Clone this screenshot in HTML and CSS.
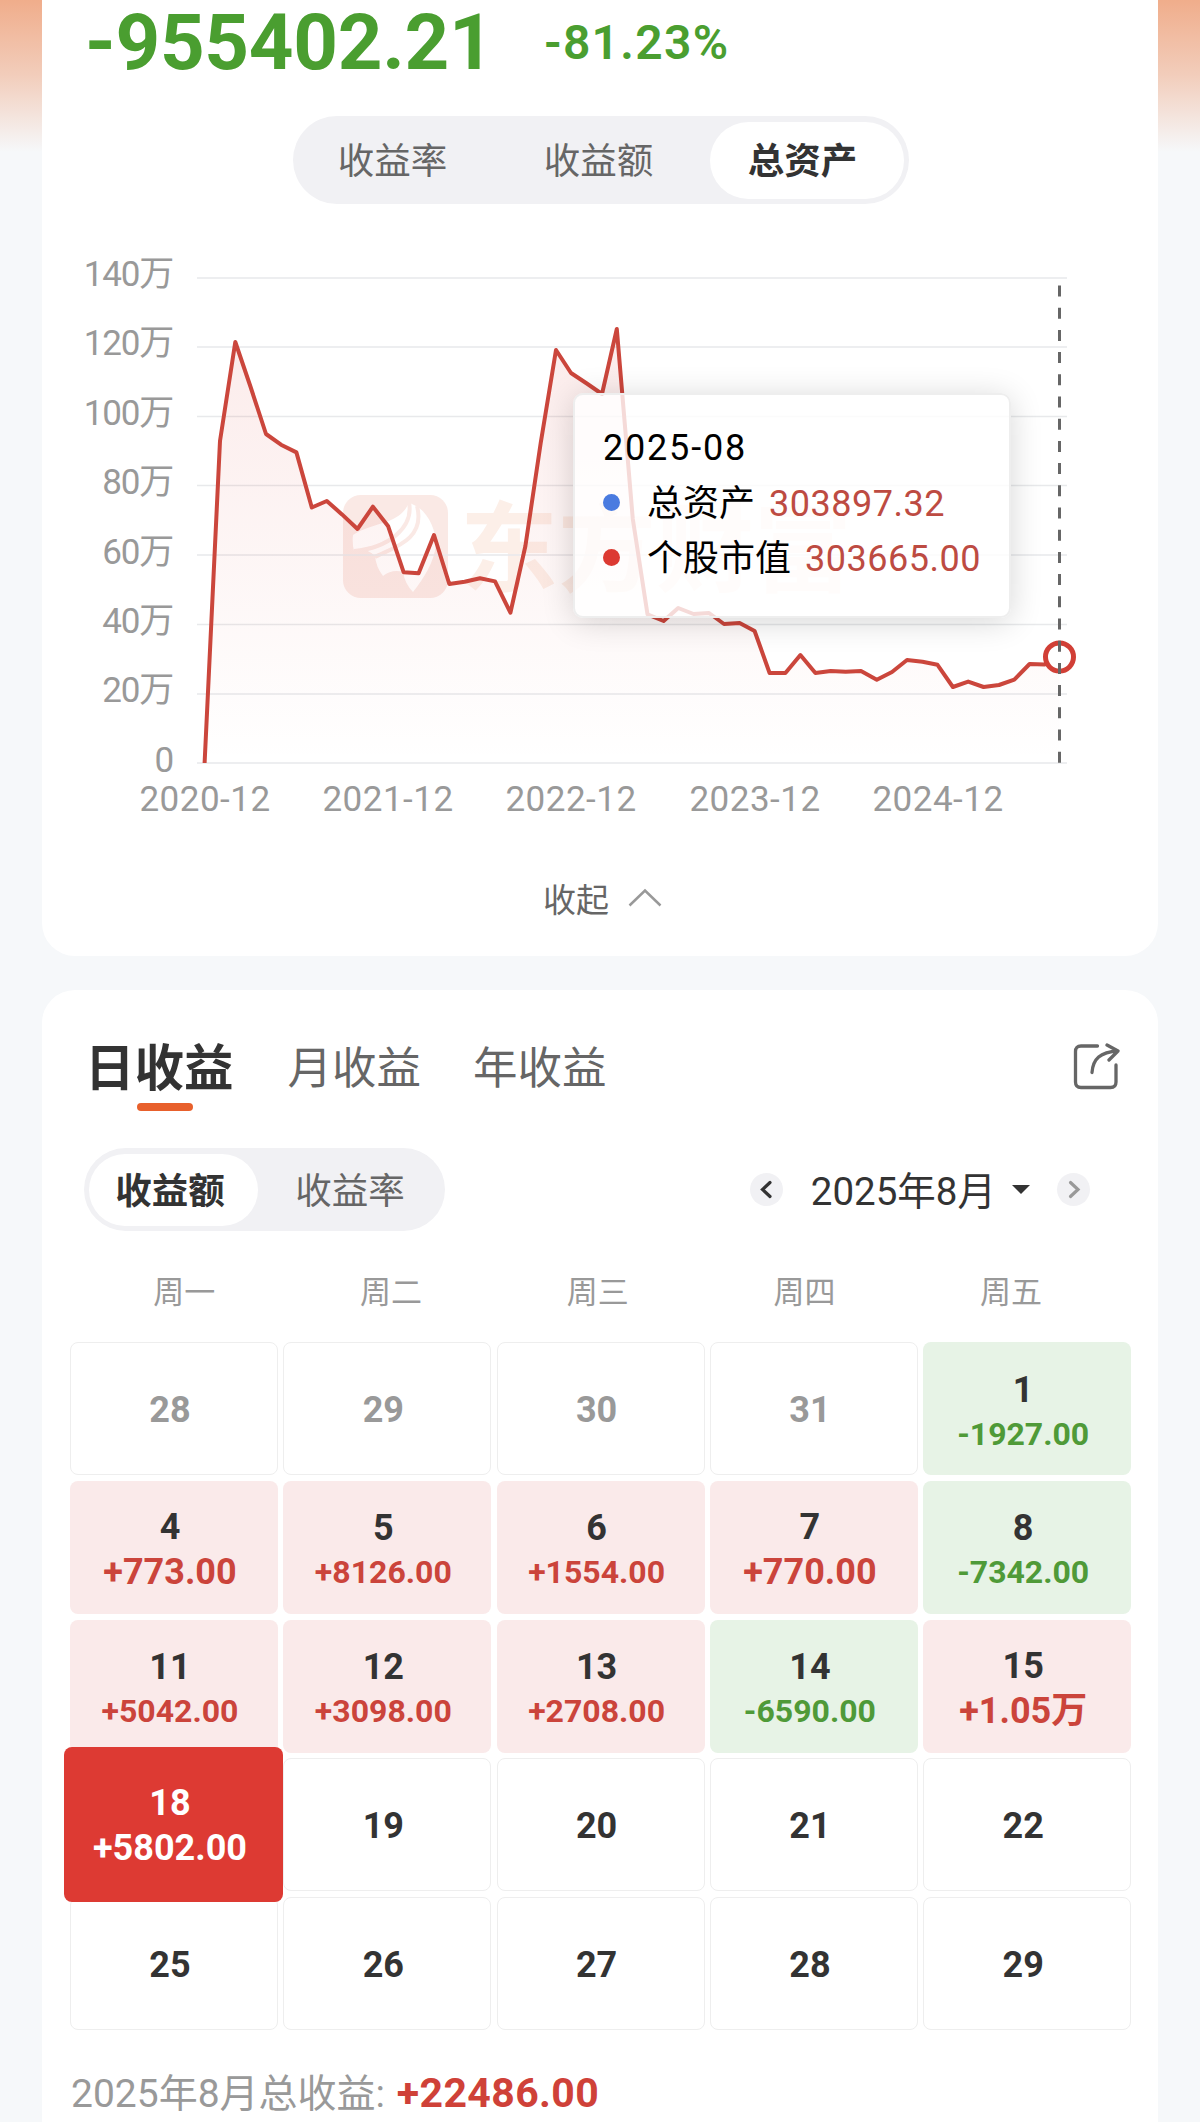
FILE: index.html
```html
<!DOCTYPE html>
<html lang="zh-CN">

<head>
    <meta charset="UTF-8">
    <meta name="viewport" content="width=device-width, initial-scale=1.0">
    <title>收益</title>
    <link rel="stylesheet" href="styles.css">
</head>

<body>
    <section class="card asset">
        <div class="total">
            <span class="total-num">-955402.21</span>
            <span class="total-rate">-81.23%</span>
        </div>
        <div class="seg seg-chart">
            <span>收益率</span>
            <span>收益额</span>
            <span class="on">总资产</span>
        </div>
        <div class="chart">
            <svg width="1116" height="600" viewBox="42 240 1116 600">
                <defs>
                    <linearGradient id="area" x1="0" y1="0" x2="0" y2="1">
                        <stop offset="0" stop-color="#dc3a32" stop-opacity=".1" />
                        <stop offset="1" stop-color="#dc3a32" stop-opacity="0" />
                    </linearGradient>
                </defs>
                <!-- 水印 -->
                <g class="mark">
                    <rect x="343" y="495" width="105" height="103" rx="18" />
                    <path class="mark-in" d="M353 535C375 521 400 525 409 502.500L418 507C429 515 436 530 436 545C434 562 424 578 413 592Q405 584 403 572Q392 569 383 576Q376 567 375 556Q364 546 354 551Q352 543 353 535Z" />
                    <path class="mark-line" d="M409 502C414 528 388 548 354 551M417 506C426 540 392 548 375 557" />
                    <text x="460" y="584">东方财富</text>
                </g>
                <g class="grid">
                    <path d="M197 278H1067M197 347H1067M197 416.5H1067M197 485.5H1067M197 555H1067M197 624.5H1067M197 694H1067M197 763H1067" />
                </g>
                <g class="axis-y">
                    <text x="173" y="286">140万</text>
                    <text x="173" y="355">120万</text>
                    <text x="173" y="425">100万</text>
                    <text x="173" y="494">80万</text>
                    <text x="173" y="564">60万</text>
                    <text x="173" y="633">40万</text>
                    <text x="173" y="702">20万</text>
                    <text x="173" y="771.5">0</text>
                </g>
                <g class="axis-x">
                    <text x="205" y="811">2020-12</text>
                    <text x="388" y="811">2021-12</text>
                    <text x="571" y="811">2022-12</text>
                    <text x="755" y="811">2023-12</text>
                    <text x="938" y="811">2024-12</text>
                </g>
                <path fill="url(#area)" d="M204.6 763L220 441L235.3 342L250.6 387L266 434L281 444.7L296.4 452.4L311.8 507.5L326.8 501L342 514.4L357.5 529L372.9 506.7L388.2 526.3L403.6 572.2L418.6 573.3L434 535L449.3 584L464.6 581.7L480 578.3L495 581.4L510.4 612.7L525.4 546L540.7 443L556 350L571 373L586.8 383.5L602 394L616.8 329L632.8 519L647.5 614.3L663.6 621L678.2 608L693.6 614L709 613L724 624L739.6 623L754.6 631L769.6 673L785.4 673L800.4 655L815.4 673L830.7 671L845.7 671.7L861 671L876.8 679.7L892 672L907 660L922.5 661.7L937.5 664.8L952.9 687L968.2 681.6L983.6 687L999 685L1014.3 679.7L1029.6 664L1044.6 664.4L1059.5 657V763Z" />
                <polyline class="line" points="204.6,763 220,441 235.3,342 250.6,387 266,434 281,444.7 296.4,452.4 311.8,507.5 326.8,501 342,514.4 357.5,529 372.9,506.7 388.2,526.3 403.6,572.2 418.6,573.3 434,535 449.3,584 464.6,581.7 480,578.3 495,581.4 510.4,612.7 525.4,546 540.7,443 556,350 571,373 586.8,383.5 602,394 616.8,329 632.8,519 647.5,614.3 663.6,621 678.2,608 693.6,614 709,613 724,624 739.6,623 754.6,631 769.6,673 785.4,673 800.4,655 815.4,673 830.7,671 845.7,671.7 861,671 876.8,679.7 892,672 907,660 922.5,661.7 937.5,664.8 952.9,687 968.2,681.6 983.6,687 999,685 1014.3,679.7 1029.6,664 1044.6,664.4 1059.5,657" />
                <circle class="point" cx="1059.5" cy="657" r="14" />
                <path class="pointer" d="M1059.5 285.5V763" />
            </svg>
            <div class="tip">
                <p class="tip-date">2025-08</p>
                <p><i class="blue"></i>总资产<b>303897.32</b></p>
                <p><i class="red"></i>个股市值<b>303665.00</b></p>
            </div>
        </div>
        <div class="fold">
            收起
            <svg width="34" height="20" viewBox="0 0 34 20">
                <path d="M1.5 17.5L17 2.5L32.5 17.5" />
            </svg>
        </div>
    </section>

    <section class="card profit">
        <div class="tabs">
            <span class="on">日收益</span>
            <span>月收益</span>
            <span>年收益</span>
            <svg class="share" width="48" height="48" viewBox="0 0 48 48">
                <path d="M24.5 3H8Q2.5 3 2.5 8.5V39Q2.5 44.5 8 44.5H37.5Q43 44.5 43 39V22" />
                <path d="M19 29.500C20 16 27 9 45 8M34 2L45 8L36 17" />
            </svg>
        </div>
        <div class="bar">
            <div class="seg seg-day">
                <span class="on">收益额</span>
                <span>收益率</span>
            </div>
            <div class="month">
                <span class="arrow"><svg width="33" height="33" viewBox="0 0 33 33"><path d="M20 9.5L12.5 16.5L20 23.5" /></svg></span>
                <span class="month-text">2025年8月</span>
                <span class="caret"></span>
                <span class="arrow next"><svg width="33" height="33" viewBox="0 0 33 33"><path d="M13.5 9.5L21 16.5L13.5 23.5" /></svg></span>
            </div>
        </div>
        <div class="week">
            <span>周一</span>
            <span>周二</span>
            <span>周三</span>
            <span>周四</span>
            <span>周五</span>
        </div>
        <div class="days">
            <div class="day out">28</div>
            <div class="day out">29</div>
            <div class="day out">30</div>
            <div class="day out">31</div>
            <div class="day down">1<em>-1927.00</em></div>

            <div class="day up big">4<em>+773.00</em></div>
            <div class="day up">5<em>+8126.00</em></div>
            <div class="day up">6<em>+1554.00</em></div>
            <div class="day up big">7<em>+770.00</em></div>
            <div class="day down">8<em>-7342.00</em></div>

            <div class="day up">11<em>+5042.00</em></div>
            <div class="day up">12<em>+3098.00</em></div>
            <div class="day up">13<em>+2708.00</em></div>
            <div class="day down">14<em>-6590.00</em></div>
            <div class="day up big">15<em>+1.05万</em></div>

            <div class="day big cur">18<em>+5802.00</em></div>
            <div class="day">19</div>
            <div class="day">20</div>
            <div class="day">21</div>
            <div class="day">22</div>

            <div class="day">25</div>
            <div class="day">26</div>
            <div class="day">27</div>
            <div class="day">28</div>
            <div class="day">29</div>
        </div>
        <div class="sum">2025年8月总收益: <b>+22486.00</b></div>
    </section>
</body>

</html>
```
FILE: styles.css
```css
* {
    margin: 0;
    padding: 0;
    box-sizing: border-box;
}

body {
    height: 2122px;
    overflow: hidden;
    background: linear-gradient(#f0ad8b, #f2cdbb 75px, #f6f8fa 152px) no-repeat #f6f8fa;
    font-family: Roboto, "Noto Sans CJK SC", sans-serif;
    color: #333;
}

.card {
    width: 1116px;
    margin: 0 auto;
    background: #fff;
    border-radius: 33px;
}

.asset {
    height: 956px;
    border-radius: 0 0 33px 33px;
}

.total {
    display: flex;
    height: 116px;
    padding-left: 43px;
    color: #4a9e30;
    font-weight: 700;
    line-height: 86px;
}

.total-num {
    width: 459px;
    font-size: 78px;
    letter-spacing: -.3px;
}

.total-rate {
    font-size: 48px;
    font-weight: 600;
    letter-spacing: 1.3px;
}

/* 切换按钮 */
.seg {
    display: flex;
    background: #f1f1f4;
    border-radius: 44px;
    color: #666;
    font-size: 36.5px;
    text-align: center;
}

.seg .on {
    background: #fff;
    border-radius: 39px;
    color: #333;
    font-weight: 700;
}

.seg-chart {
    width: 616px;
    height: 88px;
    margin-left: 251px;
    padding: 6px 5px;
    line-height: 80px;
}

.seg-chart span {
    width: 206px;
    padding-right: 17px;
}

.seg-chart .on {
    width: 194px;
    height: 77px;
    padding-right: 9px;
}

.chart {
    position: relative;
    height: 600px;
    margin-top: 36px;
}

.chart svg {
    display: block;
}

.mark {
    fill: #fae9e5;
    font-size: 98px;
    font-weight: 700;
}

.mark text {
    fill: #fcefe8;
}

.mark-in {
    fill: #fff;
}

.mark-line {
    fill: none;
    stroke: #fae9e5;
    stroke-width: 4;
}

.grid {
    fill: none;
    stroke: #e8e9eb;
    stroke-width: 1.5;
}

.axis-x,
.axis-y {
    fill: #999;
    font-size: 35px;
    text-anchor: end;
}

.axis-y {
    letter-spacing: -1.2px;
}

.axis-x {
    text-anchor: middle;
    letter-spacing: .5px;
}

.line {
    fill: none;
    stroke: #cb463c;
    stroke-width: 4;
    stroke-linejoin: round;
}

.point {
    fill: #fff;
    stroke: #d13f36;
    stroke-width: 5;
}

.pointer {
    stroke: #666;
    stroke-width: 3;
    stroke-dasharray: 11 11.2;
}

.tip {
    position: absolute;
    left: 531px;
    top: 153px;
    width: 438px;
    height: 225px;
    padding: 26px 0 0 28px;
    background: rgba(255, 255, 255, .8);
    border: 2px solid #eee;
    border-radius: 10px;
    box-shadow: 0 4px 32px rgba(0, 0, 0, .16);
    color: #000;
    font-size: 36px;
    line-height: 55.5px;
    white-space: nowrap;
}

.tip p {
    display: flex;
    align-items: center;
}

.tip-date {
    letter-spacing: 1.8px;
}

.tip i {
    width: 17px;
    height: 17px;
    margin: -4px 27px 0 0;
    border-radius: 50%;
}

.tip b {
    margin-left: 14px;
    color: #bd4b42;
    font-weight: 400;
    letter-spacing: .5px;
}

.blue {
    background: #4a7be0;
}

.red {
    background: #dc3a32;
}

.fold {
    display: flex;
    align-items: center;
    justify-content: center;
    gap: 19px;
    height: 50px;
    margin-top: 33px;
    padding-left: 5px;
    color: #666;
    font-size: 33px;
}

.fold path {
    fill: none;
    stroke: #999;
    stroke-width: 2.5;
}

.profit {
    height: 1200px;
    margin-top: 34px;
}

.tabs {
    display: flex;
    height: 158px;
    padding: 43px 37px 0 43px;
    color: #666;
    font-size: 44.5px;
    line-height: 72px;
}

.tabs span {
    margin-right: 52px;
}

.tabs .on {
    position: relative;
    margin-right: 54px;
    color: #333;
    font-size: 49.5px;
    font-weight: 700;
}

.tabs .on::after {
    content: "";
    position: absolute;
    left: 52px;
    top: 70px;
    width: 56px;
    height: 8px;
    border-radius: 4px;
    background: #e8602c;
}

.share {
    margin: 10px 0 0 auto;
    fill: none;
    stroke: #666;
    stroke-width: 3.3;
    stroke-linecap: round;
    stroke-linejoin: round;
}

.bar {
    display: flex;
    justify-content: space-between;
    padding: 0 68px 0 42px;
}

.seg-day {
    width: 361px;
    height: 83px;
    padding: 6px 5px;
    line-height: 75px;
}

.seg-day .on {
    width: 169px;
    height: 72px;
    padding-right: 7px;
}

.seg-day span + span {
    width: 182px;
    padding-left: 2px;
}

.month {
    display: flex;
    align-items: center;
    font-size: 38.5px;
}

.arrow {
    width: 33px;
    height: 33px;
    border-radius: 50%;
    background: #f1f1f4;
}

.arrow svg {
    display: block;
    fill: none;
    stroke: #333;
    stroke-width: 3.2;
    stroke-linecap: round;
}

.next svg {
    stroke: #999;
}

.month-text {
    margin: -4px 16px 0 28px;
}

.caret {
    margin-right: 27px;
    border: 9px solid transparent;
    border-top: 9px solid #333;
    border-bottom: 0;
}

.week {
    display: grid;
    grid-template-columns: repeat(5, 206.7px);
    height: 111px;
    padding-left: 39px;
    color: #999;
    font-size: 31px;
    line-height: 124px;
    text-align: center;
}

.days {
    display: grid;
    grid-template-columns: repeat(5, 208px);
    grid-auto-rows: 133px;
    gap: 5.8px 5.3px;
    padding-left: 28px;
}

.day {
    display: flex;
    flex-direction: column;
    align-items: center;
    justify-content: center;
    padding: 2px 8px 0 0;
    border: 1px solid #eee;
    border-radius: 8px;
    font-size: 36px;
    font-weight: 700;
    line-height: 44px;
}

.day em {
    font-size: 32px;
    font-style: normal;
}

.big em {
    font-size: 36px;
    line-height: 47px;
}

.out {
    color: #999;
}

.up,
.down {
    padding-top: 6px;
    border: 0;
}

.up {
    background: #faeaea;
}

.up em {
    color: #cb443b;
}

.down {
    background: #e7f3e6;
}

.down em {
    color: #4f9a38;
}

/* 选中的日期 */
.cur {
    z-index: 1;
    margin: -11px -5px -11px -6px;
    padding: 3px 7px 0 0;
    border: 0;
    background: #dd3a33;
    color: #fff;
}

.sum {
    padding: 37px 0 0 29px;
    color: #999;
    font-size: 39px;
    line-height: 52px;
}

.sum b {
    margin-left: 2px;
    color: #cf4138;
    font-size: 41px;
    letter-spacing: .4px;
}
```
